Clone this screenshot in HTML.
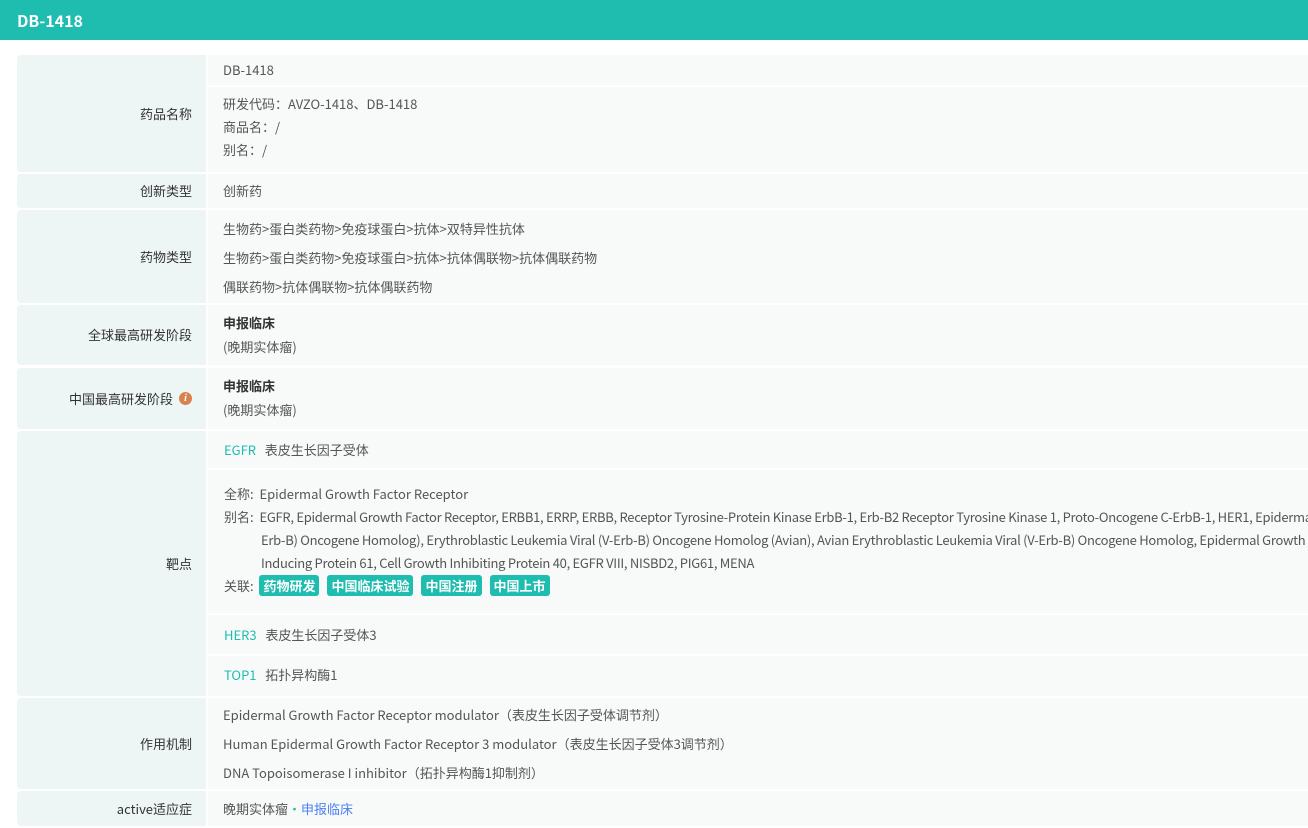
<!DOCTYPE html>
<html><head><meta charset="utf-8"><style>
*{margin:0;padding:0;box-sizing:border-box}
html,body{width:1308px;height:828px;overflow:hidden;background:#fff;font-family:"Noto Sans CJK SC","Liberation Sans",sans-serif;font-size:13px;color:#555}
.hd{position:absolute;left:0;top:0;width:1308px;height:40px;background:#1fbcb0;color:#fff;font-weight:bold;font-size:16px;line-height:40px;padding-left:17px}
.l{position:absolute;left:17px;width:189px;background:#eef6f5;color:#333;text-align:right;padding-right:14px;display:flex;align-items:center;justify-content:flex-end;border-radius:4px 0 0 4px;line-height:18px}
.v{position:absolute;left:208px;width:1100px;background:#f8fafa}
.t{position:absolute;left:223px;white-space:nowrap;line-height:18px}
.sep{position:absolute;left:208px;width:1100px;height:2px;background:#fff}
.c{color:#1fbcb0}
.b{font-weight:bold;color:#333}
.ls{letter-spacing:-0.28px}
.tag{display:inline-block;background:#1fbcb0;color:#fff;font-weight:bold;border-radius:3px;padding:0 4px;line-height:21px;margin-right:8px}
.i{display:inline-block;width:13px;height:13px;border-radius:50%;background:#d9824e;color:#fff;font-size:10px;font-style:italic;font-weight:bold;text-align:center;line-height:13px;margin-left:6px;font-family:"Liberation Serif",serif}
</style></head><body>
<div class="hd">DB-1418</div>

<div class="l" style="top:55px;height:117px">药品名称</div>
<div class="v" style="top:55px;height:117px"></div>
<div class="sep" style="top:85px"></div>
<div class="t" style="top:61px">DB-1418</div>
<div class="t" style="top:95px">研发代码：AVZO-1418、DB-1418</div>
<div class="t" style="top:118px">商品名：/</div>
<div class="t" style="top:141px">别名：/</div>

<div class="l" style="top:174px;height:34px">创新类型</div>
<div class="v" style="top:174px;height:34px"></div>
<div class="t" style="top:182px">创新药</div>

<div class="l" style="top:210px;height:93px">药物类型</div>
<div class="v" style="top:210px;height:93px"></div>
<div class="t" style="top:220px">生物药&gt;蛋白类药物&gt;免疫球蛋白&gt;抗体&gt;双特异性抗体</div>
<div class="t" style="top:249px">生物药&gt;蛋白类药物&gt;免疫球蛋白&gt;抗体&gt;抗体偶联物&gt;抗体偶联药物</div>
<div class="t" style="top:278px">偶联药物&gt;抗体偶联物&gt;抗体偶联药物</div>

<div class="l" style="top:305px;height:60px">全球最高研发阶段</div>
<div class="v" style="top:305px;height:60px"></div>
<div class="t b" style="top:314px">申报临床</div>
<div class="t" style="top:338px">(晚期实体瘤)</div>

<div class="l" style="top:368px;height:61px">中国最高研发阶段<span class="i">i</span></div>
<div class="v" style="top:368px;height:61px"></div>
<div class="t b" style="top:377px">申报临床</div>
<div class="t" style="top:401px">(晚期实体瘤)</div>

<div class="l" style="top:431px;height:265px">靶点</div>
<div class="v" style="top:431px;height:265px"></div>
<div class="sep" style="top:468px"></div>
<div class="sep" style="top:613px"></div>
<div class="sep" style="top:654px"></div>
<div class="t" style="top:441px;left:224px"><span class="c">EGFR</span>&nbsp;&nbsp; 表皮生长因子受体</div>
<div class="t" style="top:485px;left:224px">全称:&nbsp; Epidermal Growth Factor Receptor</div>
<div class="t" style="top:508px;left:224px">别名:&nbsp; <span class="ls">EGFR, Epidermal Growth Factor Receptor, ERBB1, ERRP, ERBB, Receptor Tyrosine-Protein Kinase ErbB-1, Erb-B2 Receptor Tyrosine Kinase 1, Proto-Oncogene C-ErbB-1, HER1, Epidermal</span></div>
<div class="t ls" style="top:531px;left:261px">Erb-B) Oncogene Homolog), Erythroblastic Leukemia Viral (V-Erb-B) Oncogene Homolog (Avian), Avian Erythroblastic Leukemia Viral (V-Erb-B) Oncogene Homolog, Epidermal Growth</div>
<div class="t ls" style="top:554px;left:261px">Inducing Protein 61, Cell Growth Inhibiting Protein 40, EGFR VIII, NISBD2, PIG61, MENA</div>
<div class="t" style="top:575px;left:224px;line-height:21px">关联:&nbsp; <span class="tag">药物研发</span><span class="tag">中国临床试验</span><span class="tag">中国注册</span><span class="tag">中国上市</span></div>
<div class="t" style="top:626px;left:224px"><span class="c">HER3</span>&nbsp;&nbsp; 表皮生长因子受体3</div>
<div class="t" style="top:666px;left:224px"><span class="c">TOP1</span>&nbsp;&nbsp; 拓扑异构酶1</div>

<div class="l" style="top:698px;height:91px">作用机制</div>
<div class="v" style="top:698px;height:91px"></div>
<div class="t" style="top:706px">Epidermal Growth Factor Receptor modulator（表皮生长因子受体调节剂）</div>
<div class="t" style="top:735px">Human Epidermal Growth Factor Receptor 3 modulator（表皮生长因子受体3调节剂）</div>
<div class="t" style="top:764px">DNA Topoisomerase I inhibitor（拓扑异构酶1抑制剂）</div>

<div class="l" style="top:791px;height:35px">active适应症</div>
<div class="v" style="top:791px;height:35px"></div>
<div class="t" style="top:800px">晚期实体瘤<span class="c">•</span><span style="color:#4a7ff0">申报临床</span></div>
</body></html>
